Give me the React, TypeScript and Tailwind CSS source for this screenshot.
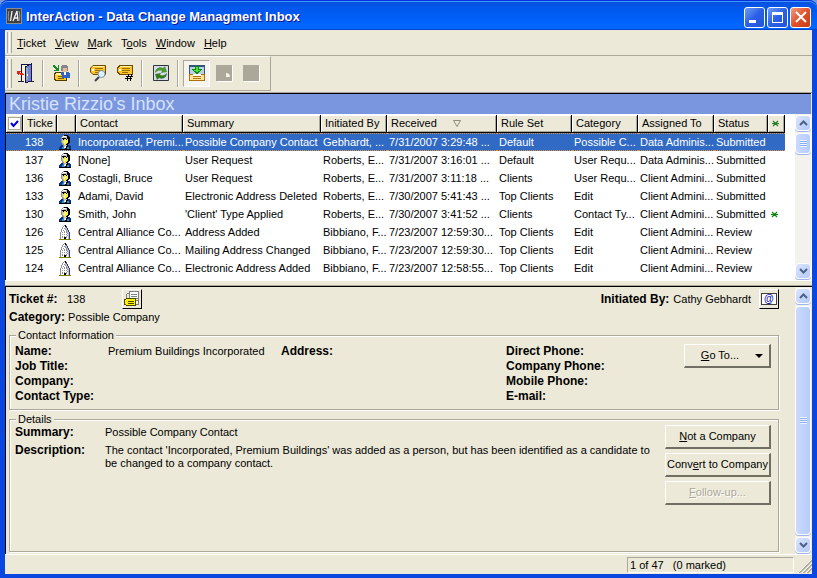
import type { ReactNode } from "react";

type Ticket = {
  id: string;
  kind: "person" | "company";
  contact: string;
  summary: string;
  by: string;
  received: string;
  rule: string;
  category: string;
  assigned: string;
  status: string;
  flagged?: boolean;
};

const tickets: Ticket[] = [
  { id: "138", kind: "person", contact: "Incorporated, Premi...", summary: "Possible Company Contact", by: "Gebhardt, ...", received: "7/31/2007 3:29:48 ...", rule: "Default", category: "Possible C...", assigned: "Data Adminis...", status: "Submitted" },
  { id: "137", kind: "person", contact: "[None]", summary: "User Request", by: "Roberts, E...", received: "7/31/2007 3:16:01 ...", rule: "Default", category: "User Requ...", assigned: "Data Adminis...", status: "Submitted" },
  { id: "136", kind: "person", contact: "Costagli, Bruce", summary: "User Request", by: "Roberts, E...", received: "7/31/2007 3:11:18 ...", rule: "Clients", category: "User Requ...", assigned: "Client Admini...", status: "Submitted" },
  { id: "133", kind: "person", contact: "Adami, David", summary: "Electronic Address Deleted", by: "Roberts, E...", received: "7/30/2007 5:41:43 ...", rule: "Top Clients", category: "Edit", assigned: "Client Admini...", status: "Submitted" },
  { id: "130", kind: "person", contact: "Smith, John", summary: "'Client' Type Applied", by: "Roberts, E...", received: "7/30/2007 3:41:52 ...", rule: "Clients", category: "Contact Ty...", assigned: "Client Admini...", status: "Submitted", flagged: true },
  { id: "126", kind: "company", contact: "Central Alliance Co...", summary: "Address Added", by: "Bibbiano, F...", received: "7/23/2007 12:59:30...", rule: "Top Clients", category: "Edit", assigned: "Client Admini...", status: "Review" },
  { id: "125", kind: "company", contact: "Central Alliance Co...", summary: "Mailing Address Changed", by: "Bibbiano, F...", received: "7/23/2007 12:59:30...", rule: "Top Clients", category: "Edit", assigned: "Client Admini...", status: "Review" },
  { id: "124", kind: "company", contact: "Central Alliance Co...", summary: "Electronic Address Added", by: "Bibbiano, F...", received: "7/23/2007 12:58:55...", rule: "Top Clients", category: "Edit", assigned: "Client Admini...", status: "Review" },
];

const menus = [
  ["", "T", "icket"],
  ["", "V", "iew"],
  ["", "M", "ark"],
  ["T", "o", "ols"],
  ["", "W", "indow"],
  ["", "H", "elp"],
];

const palette: Record<string, string> = {
  k: "#000000",
  y: "#f4f030",
  g: "#909090",
  s: "#c0c0c0",
  w: "#ffffff",
  b: "#0a2f8c",
  t: "#2f8fb8",
  o: "#808000",
  n: "#33399c",
};

const personPixels = [
  "....gkkkk...",
  "...gwwwskk..",
  "..gwsssskkk.",
  "..gkkkkskkk.",
  "..gskyykykk.",
  "..gssyywykk.",
  "..gsyywyykk.",
  "..gsywyyykk.",
  "...gsyyykk..",
  "...ggyykk...",
  "..bbgssskbb.",
  ".bbbtswkkbbb",
  "bbbttwwkttbb",
  "bbbtttkkttbb",
  "kkkkkkkkkkkk",
];

const companyPixels = [
  ".....gk.....",
  "....gwkn....",
  "...gwwsn....",
  "...gwgssn...",
  "..gwwwgsn...",
  "..gwgwwgsn..",
  "..gwwgwgsn..",
  ".gwgwgwgssn.",
  ".gwwwwwwgsn.",
  ".gwgwgwgwsn.",
  ".gwwwwwwgsn.",
  ".gwgwgwgwsn.",
  ".gwgwkkgwsn.",
  ".gwwwkkwwsn.",
  "oooooooooooo",
];

const PixelIcon = ({ rows }: { rows: string[] }) => (
  <svg viewBox="0 0 12 15" className="h-[15px] w-3" shapeRendering="crispEdges" aria-hidden="true">
    {rows.flatMap((row, y) =>
      row.split("").map((c, x) =>
        c === "." ? null : <rect key={`${x}-${y}`} x={x} y={y} width="1" height="1" fill={palette[c]} />,
      ),
    )}
  </svg>
);

const DoorIcon = () => (
  <svg viewBox="0 0 18 20" className="h-5 w-[18px]" shapeRendering="crispEdges" aria-hidden="true">
    <path d="M4 1h10v17H4z" fill="#10104a" />
    <path d="M5 2h5v16H5z" fill="#f7f4c8" />
    <path d="M8 4l6-3v17l-6 2z" fill="#7684c4" />
    <path d="M8 4l6-3v17l-6 2z" fill="none" stroke="#161652" />
    <path d="M9 5h2v12H9z" fill="#98a4da" />
    <path d="M10 11h1v2h-1z" fill="#fff9a0" />
    <path d="M1 18h6v1H1zM14 18h3v1h-3z" fill="#20202a" />
    <path d="M0 8h4v1H3v1h3v1h1v1H3v-1H2v1H1v-1H0z" fill="#e02418" />
  </svg>
);

const AssignIcon = () => (
  <svg viewBox="0 0 18 18" className="size-[18px]" shapeRendering="crispEdges" aria-hidden="true">
    <path d="M3 8.500h10.500v8H3L1.500 15v-5z" fill="#ffc926" stroke="#4d3b00" />
    <path d="M3 9h9v2H3z" fill="#fff0a0" />
    <path d="M5 12h6v1H5zM5 14h6v1H5z" fill="#805c00" />
    <path d="M9 2h5v6H9z" fill="#e8bd9a" />
    <path d="M9 1h5l1 2v4h-1V4h-4v3H8V2z" fill="#85858c" />
    <path d="M8 8h7l2 2v4H9z" fill="#2f63c6" />
    <path d="M11 8h2v3h-2z" fill="#fff" />
    <path d="M0 1h2v1h1v1h1v1h1V1h1v6H1V6h2V5H2V4H1V3H0z" fill="#0b8f22" />
  </svg>
);

const TagShape = () => (
  <>
    <path d="M4 1.500h12.500v9H4L1.500 8V4z" fill="#ffc526" stroke="#6b4a00" />
    <path d="M4 2h11v1H4z" fill="#fff1a8" />
    <path d="M6 4h8v1H6zM6 6h8v1H6zM6 8h6v1H6z" fill="#9c6f00" />
    <path d="M3 5h2v2H3z" fill="#fff" />
  </>
);

const TagFindIcon = () => (
  <svg viewBox="0 0 18 18" className="size-[18px]" aria-hidden="true">
    <TagShape />
    <path d="M6 17l4-4" stroke="#39404c" strokeWidth="2" />
    <circle cx="12.500" cy="10" r="3.500" fill="#d8f0ff" stroke="#7c93a8" />
    <path d="M11 9l1-1" stroke="#fff" />
  </svg>
);

const TagNumberIcon = () => (
  <svg viewBox="0 0 18 18" className="size-[18px]" shapeRendering="crispEdges" aria-hidden="true">
    <TagShape />
    <path d="M12 10h1v3h-1zM11 13h1v4h-1zM15 10h1v3h-1zM14 13h1v4h-1zM10 12h7v1h-7zM9 14h7v1H9z" fill="#000" />
  </svg>
);

const RefreshIcon = () => (
  <svg viewBox="0 0 16 16" className="size-4" aria-hidden="true">
    <path d="M.5.5h15v15H.5z" fill="#d9dbf5" stroke="#33353c" />
    <path d="M2 8c0-4 4-7 8-5l2-2 2 6-6 1 1-2C6 5 4 6 2 8z" fill="#4d9a2c" />
    <path d="M14 8c0 4-4 7-8 5l-2 2-2-6 6-1-1 2c3 1 5 0 7-2z" fill="#357d1c" />
  </svg>
);

const InboxIcon = () => (
  <svg viewBox="0 0 16 16" className="size-4" shapeRendering="crispEdges" aria-hidden="true">
    <path d="M0 0h16v10H0z" fill="#33557d" />
    <path d="M1 2h14v8H1z" fill="#b9cfe6" />
    <path d="M0 9h16v7H0z" fill="#b07010" />
    <path d="M1 10h3v2h8v-2h3v5H1z" fill="#ffe59a" />
    <path d="M4 9h8v2H4z" fill="#fff" />
    <path d="M4 13h8v1H4z" fill="#b07818" />
    <path d="M6 1h4v3h3v1h-1v1h-1v1h-1v1H9v1H7V8H6V7H5V6H4V5H3V4h3z" fill="#0e8a12" />
    <path d="M7 2h2v5H7zM5 5h6v1H5z" fill="#4be03a" />
  </svg>
);

const TicketNotesIcon = () => (
  <svg viewBox="0 0 16 16" className="size-4" shapeRendering="crispEdges" aria-hidden="true">
    <path d="M5 .5h9.500v13H5z" fill="#fff" stroke="#808080" />
    <path d="M2.500 3v5M3 2.500h2" fill="none" stroke="#808080" />
    <path d="M7 3h6v1H7zM7 5h6v1H7zM12 7h2v1h-2zM12 9h2v1h-2z" fill="#808080" />
    <path d="M3 7.500h8.500v7H3L.5 13v-4z" fill="#fff200" stroke="#4b4600" />
    <path d="M4 10h6v1H4zM4 12h6v1H4z" fill="#4b4600" />
  </svg>
);

const Chevron = ({ up }: { up?: boolean }) => (
  <svg viewBox="0 0 9 6" className="h-1.5 w-[9px]" aria-hidden="true">
    <path d={up ? "M1 5l3.500-3.500L8 5" : "M1 1l3.500 3.500L8 1"} fill="none" stroke="#4d6185" strokeWidth="2" />
  </svg>
);

const ScrollButton = ({ up, label }: { up?: boolean; label: string }) => (
  <button
    type="button"
    aria-label={label}
    className="flex h-4 w-full shrink-0 items-center justify-center rounded-sm border border-white bg-linear-to-br from-[#dbe5fe] to-[#b3c8f8] shadow-[0_1px_0_#9db5ea]"
  >
    <Chevron up={up} />
  </button>
);

const ScrollBar = ({ name, thumb }: { name: string; thumb: string }) => (
  <div className="mr-px flex w-4 shrink-0 flex-col gap-0.5 bg-[#f3f2ec] py-px">
    <ScrollButton up label={`Scroll ${name} up`} />
    <div className={`flex items-center justify-center rounded-sm border border-white bg-linear-to-r from-[#cbdafd] to-[#b7cbfb] shadow-[0_1px_0_#9db5ea] ${thumb}`}>
      <div className="h-[7px] w-[7px] bg-[repeating-linear-gradient(#eef4fe_0_1px,#8cb0f8_1px_2px)]" />
    </div>
    <div className="mt-auto">
      <ScrollButton label={`Scroll ${name} down`} />
    </div>
  </div>
);

const ToolButton = ({ label, children }: { label: string; children?: ReactNode }) => (
  <button type="button" aria-label={label} className="flex h-[26px] w-[27px] shrink-0 items-center justify-center">
    {children}
  </button>
);

const Separator = () => <div className="mr-1 ml-[3px] h-[27px] w-0.5 shrink-0 border-r border-white bg-[#aca899]" />;

const Grip = () => (
  <div className="flex shrink-0 gap-px self-stretch py-0.5">
    <div className="w-[3px] border-r border-l border-r-[#aca899] border-l-white" />
    <div className="w-[3px] border-r border-l border-r-[#aca899] border-l-white" />
  </div>
);

const HeadCell = ({ children, pad = "px-1" }: { children?: ReactNode; pad?: string }) => (
  <th
    scope="col"
    className={`h-[18px] overflow-hidden border-r border-b border-black bg-[#ece9d8] text-left leading-[17px] font-normal whitespace-nowrap shadow-[inset_1px_1px_0_#fff,inset_-1px_-1px_0_#aca899] ${pad}`}
  >
    {children}
  </th>
);

const PushButton = ({ children, disabled, width = "w-[106px]" }: { children: ReactNode; disabled?: boolean; width?: string }) => (
  <button
    type="button"
    disabled={disabled}
    className={`flex h-6 items-center justify-center border-t border-r-2 border-b-2 border-l border-t-white border-r-[#716f64] border-b-[#716f64] border-l-white whitespace-nowrap disabled:text-[#aca899] disabled:[text-shadow:1px_1px_0_#fff] ${width}`}
  >
    {children}
  </button>
);

const Group = ({ title, className, children }: { title: string; className: string; children: ReactNode }) => (
  <fieldset className={`min-w-0 border border-[#aca899] shadow-[1px_1px_0_#fff,inset_1px_1px_0_#fff] ${className}`}>
    <legend className="ml-1.5 bg-[#ece9d8] px-0.5 leading-3">{title}</legend>
    {children}
  </fieldset>
);

const TitleBar = () => (
  <header className="flex h-[30px] shrink-0 items-center gap-1 rounded-t-lg bg-linear-to-b from-[#0a4fd8] from-0% via-[#0058ee] via-30% to-[#0066ff] to-85% px-1.5 shadow-[inset_0_1px_0_#0831d9,inset_0_2px_0_#3d95ff,inset_0_-1px_0_#0043cf]">
    <svg viewBox="0 0 16 16" className="mt-0.5 size-4" aria-hidden="true">
      <path d="M0 0h16v16H0z" fill="#8b8d91" />
      <path d="M1 1h14v14H1z" fill="#3e4044" />
      <path d="M3 3c-1 4-1 7 0 10M13 3c1 4 1 7 0 10" fill="none" stroke="#9a9ca0" />
      <path d="M6 3L4.500 13M7 13l4-10 1 10M8.500 10h3" fill="none" stroke="#f2f2f2" strokeWidth="1.300" />
    </svg>
    <h1 className="mt-1 flex-1 truncate text-[13px] leading-5 font-bold text-white [text-shadow:1px_1px_0_#0f1089]">
      InterAction - Data Change Managment Inbox
    </h1>
    <div className="mt-1 flex gap-0.5">
      <button type="button" aria-label="Minimize" className="flex size-[21px] items-end rounded-[3px] border border-white bg-linear-to-br from-[#6f9cf5] via-[#2b5fe6] to-[#2455d8] p-1">
        <span className="h-[3px] w-[7px] bg-white" />
      </button>
      <button type="button" aria-label="Maximize" className="flex size-[21px] items-center justify-center rounded-[3px] border border-white bg-linear-to-br from-[#6f9cf5] via-[#2b5fe6] to-[#2455d8]">
        <span className="size-[11px] border border-t-[3px] border-white" />
      </button>
      <button type="button" aria-label="Close" className="flex size-[21px] items-center justify-center rounded-[3px] border border-white bg-linear-to-br from-[#f0997f] via-[#e0512b] to-[#c83a12]">
        <svg viewBox="0 0 12 12" className="size-3" aria-hidden="true">
          <path d="M1 1l10 10M11 1L1 11" stroke="#fff" strokeWidth="2" />
        </svg>
      </button>
    </div>
  </header>
);

const ToolBar = () => (
  <div className="flex h-[37px] shrink-0 border-b border-[#aca899] pb-px">
    <div className="flex items-center border-t border-r border-b border-t-white border-r-[#aca899] border-b-[#aca899] pr-[6px]">
      <Grip />
      <div className="flex items-center pb-px">
        <ToolButton label="Exit"><DoorIcon /></ToolButton>
        <Separator />
        <ToolButton label="Assign ticket"><AssignIcon /></ToolButton>
        <Separator />
        <ToolButton label="Find ticket"><TagFindIcon /></ToolButton>
        <ToolButton label="Go to ticket number"><TagNumberIcon /></ToolButton>
        <Separator />
        <ToolButton label="Refresh"><RefreshIcon /></ToolButton>
        <Separator />
        <button
          type="button"
          aria-label="Inbox"
          aria-pressed="true"
          className="flex size-[27px] items-center justify-center border border-t-[#aca899] border-r-white border-b-white border-l-[#aca899] bg-[#f6f4ec]"
        >
          <InboxIcon />
        </button>
        <ToolButton label="Pending">
          <span className="flex size-4 items-center justify-end bg-[#aca899] pt-1 pr-0.5 shadow-[1px_1px_0_#fff]">
            <span className="size-1 rounded-tr-full bg-[#f4f2e8]" />
          </span>
        </ToolButton>
        <ToolButton label="Closed">
          <span className="size-4 bg-[#aca899] shadow-[1px_1px_0_#fff]" />
        </ToolButton>
      </div>
    </div>
  </div>
);

const Asterisk = ({ className }: { className: string }) => (
  <svg viewBox="0 0 7 7" className={`size-[7px] ${className}`} role="img" aria-label="Flagged">
    <path d="M0 3.500h7M1 1l5 5M6 1L1 6" fill="none" stroke="currentColor" strokeWidth="1.200" />
  </svg>
);

const TicketTable = () => (
  <table className="w-full table-fixed border-separate border-spacing-0 leading-[18px]">
    <colgroup>
      <col className="w-[17px]" />
      <col className="w-[34px]" />
      <col className="w-[19px]" />
      <col className="w-[107px]" />
      <col className="w-[138px]" />
      <col className="w-[66px]" />
      <col className="w-[110px]" />
      <col className="w-[75px]" />
      <col className="w-[66px]" />
      <col className="w-[76px]" />
      <col className="w-[54px]" />
      <col className="w-[17px]" />
      <col />
    </colgroup>
    <thead>
      <tr>
        <HeadCell pad="p-0">
          <label className="relative flex items-center justify-center">
            <input type="checkbox" defaultChecked aria-label="Mark all tickets" className="size-[13px] appearance-none border border-[#aca899] bg-white" />
            <svg viewBox="0 0 9 8" className="pointer-events-none absolute h-2 w-[9px]" aria-hidden="true">
              <path d="M1 3l2.500 3L8 1" fill="none" stroke="#0000e0" strokeWidth="2" />
            </svg>
          </label>
        </HeadCell>
        <HeadCell>Ticke</HeadCell>
        <HeadCell />
        <HeadCell>Contact</HeadCell>
        <HeadCell>Summary</HeadCell>
        <HeadCell>Initiated By</HeadCell>
        <HeadCell>
          <span className="flex items-center gap-4">
            Received
            <svg viewBox="0 0 8 7" className="h-[7px] w-2" aria-hidden="true">
              <path d="M.5.5h7L4 6.500z" fill="none" stroke="#8f8c7f" />
            </svg>
          </span>
        </HeadCell>
        <HeadCell>Rule Set</HeadCell>
        <HeadCell>Category</HeadCell>
        <HeadCell>Assigned To</HeadCell>
        <HeadCell>Status</HeadCell>
        <HeadCell><Asterisk className="text-[#2c7a2c]" /></HeadCell>
        <td />
      </tr>
    </thead>
    <tbody>
      {tickets.map((t, i) => (
        <tr
          key={t.id}
          aria-selected={i === 0}
          className="h-[18px] whitespace-nowrap aria-selected:text-white aria-selected:[&>td:not(:last-child)]:border-y aria-selected:[&>td:not(:last-child)]:border-dotted aria-selected:[&>td:not(:last-child)]:border-[#e0973a] aria-selected:[&>td:not(:last-child)]:bg-[#316ac5] aria-selected:[&>td:not(:last-child)]:leading-4 [&>td]:overflow-hidden [&>td]:p-0 [&>td]:pl-0.5"
        >
          <td />
          <td>{t.id}</td>
          <td>
            <PixelIcon rows={t.kind === "person" ? personPixels : companyPixels} />
          </td>
          <td>{t.contact}</td>
          <td>{t.summary}</td>
          <td>{t.by}</td>
          <td>{t.received}</td>
          <td>{t.rule}</td>
          <td>{t.category}</td>
          <td>{t.assigned}</td>
          <td>{t.status}</td>
          <td>{t.flagged && <Asterisk className="ml-px text-[#0a8a0a]" />}</td>
          <td />
        </tr>
      ))}
    </tbody>
  </table>
);

const DetailPane = () => (
  <div className="flex min-w-0 flex-1 flex-col pr-4 pb-0.5 pl-[3px]">
    <div className="flex items-center pt-0.5 leading-5">
      <b className="w-[58px] text-xs">Ticket #:</b>
      <span className="w-[55px]">138</span>
      <button type="button" aria-label="Ticket notes" className="flex size-5 items-center justify-center border border-t-white border-r-black border-b-black border-l-white">
        <TicketNotesIcon />
      </button>
      <b className="ml-auto text-xs">Initiated By:</b>
      <span className="ml-1">Cathy Gebhardt</span>
      <button type="button" aria-label="E-mail initiator" className="ml-2 flex size-5 items-center justify-center border border-t-white border-r-black border-b-black border-l-white">
        <span className="flex h-3 w-4 items-center justify-center border border-[#404040] bg-white text-[10px] leading-3 font-bold text-[#1616b0]">@</span>
      </button>
    </div>
    <div className="leading-4">
      <b className="text-xs leading-4">Category:</b> Possible Company
    </div>

    <Group title="Contact Information" className="mt-1 h-[81px] shrink-0">
      <div className="flex items-start pr-[7px] pl-[5px]">
        <dl className="grid flex-1 grid-cols-[93px_1fr] pt-[3px] leading-[15px] [&_dt]:text-xs [&_dt]:leading-[15px] [&_dt]:font-bold">
          <dt>Name:</dt>
          <dd>Premium Buildings Incorporated</dd>
          <dt>Job Title:</dt>
          <dd />
          <dt>Company:</dt>
          <dd />
          <dt className="whitespace-nowrap">Contact Type:</dt>
          <dd />
        </dl>
        <dl className="w-[225px] pt-[3px] text-xs leading-[15px] font-bold">
          <dt>Address:</dt>
        </dl>
        <dl className="w-[178px] pt-[3px] text-xs leading-[15px] font-bold">
          <dt>Direct Phone:</dt>
          <dt>Company Phone:</dt>
          <dt>Mobile Phone:</dt>
          <dt>E-mail:</dt>
        </dl>
        <PushButton width="w-[87px] mt-[3px]">
          <span className="flex-1"><u>G</u>o To...</span>
          <svg viewBox="0 0 8 4" className="mr-1.5 h-1 w-2" aria-hidden="true">
            <path d="M0 0h8L4 4z" />
          </svg>
        </PushButton>
      </div>
    </Group>

    <Group title="Details" className="mt-[3px] flex-1">
      <div className="flex items-start pr-[7px] pl-[5px]">
        <dl className="grid flex-1 grid-cols-[90px_1fr] gap-y-[5px] pt-px leading-[13px] [&_dt]:text-xs [&_dt]:leading-[13px] [&_dt]:font-bold">
          <dt>Summary:</dt>
          <dd>Possible Company Contact</dd>
          <dt>Description:</dt>
          <dd className="pr-2">
            The contact 'Incorporated, Premium Buildings' was added as a person, but has been identified as a candidate to be changed to a company contact.
          </dd>
        </dl>
        <div className="flex flex-col gap-1">
          <PushButton><span><u>N</u>ot a Company</span></PushButton>
          <PushButton><span>Conv<u>e</u>rt to Company</span></PushButton>
          <PushButton disabled><span><u>F</u>ollow-up...</span></PushButton>
        </div>
      </div>
    </Group>
  </div>
);

export default function App() {
  return (
    <div className="flex h-screen flex-col overflow-hidden bg-[#7a96df] font-['Liberation_Sans',Arial,sans-serif] text-[11px] leading-[13px] text-black">
      <TitleBar />
      <main className="flex min-h-0 flex-1 flex-col border-r-[5px] border-b-4 border-l-[5px] border-[#0a46e0] bg-[#ece9d8]">
        <div className="flex h-[26px] shrink-0 items-center border-b border-[#aca899] pr-px">
          <Grip />
          <nav className="ml-[5px] flex gap-[9px] pt-px" aria-label="Main menu">
            {menus.map(([before, key, after]) => (
              <button key={key + after} type="button">
                {before}
                <u>{key}</u>
                {after}
              </button>
            ))}
          </nav>
        </div>
        <ToolBar />
        <h2 className="mr-px h-[21px] shrink-0 border-t border-l border-black bg-[#7a96df] pl-[3px] text-lg leading-5 text-[#d6e2fa]">
          Kristie Rizzio's Inbox
        </h2>
        <section className="flex h-[166px] shrink-0 border-l border-black bg-white" aria-label="Tickets">
          <div className="min-w-0 flex-1 overflow-hidden pt-px">
            <TicketTable />
          </div>
          <ScrollBar name="tickets" thumb="h-[21px]" />
        </section>
        <div className="h-1.5 shrink-0 border-t border-b border-t-white border-b-[#aca899]" />
        <section className="flex min-h-0 flex-1 border-t border-l border-black" aria-label="Ticket details">
          <DetailPane />
          <ScrollBar name="details" thumb="flex-1" />
        </section>
        <footer className="flex h-5 shrink-0 justify-end border-t border-white pt-0.5 pb-px">
          <div className="w-[167px] border border-t-[#aca899] border-r-white border-b-white border-l-[#aca899] pl-0.5 leading-[15px] whitespace-pre">
            1 of 47   (0 marked)
          </div>
          <svg viewBox="0 0 14 14" className="ml-1 size-3.5 self-end" aria-hidden="true">
            <path d="M1 14L14 1M5 14l9-9M9 14l5-5" stroke="#aca899" strokeWidth="2" />
            <path d="M0 14L14 0M4 14L14 4M8 14l6-6" stroke="#fff" />
          </svg>
        </footer>
      </main>
    </div>
  );
}
